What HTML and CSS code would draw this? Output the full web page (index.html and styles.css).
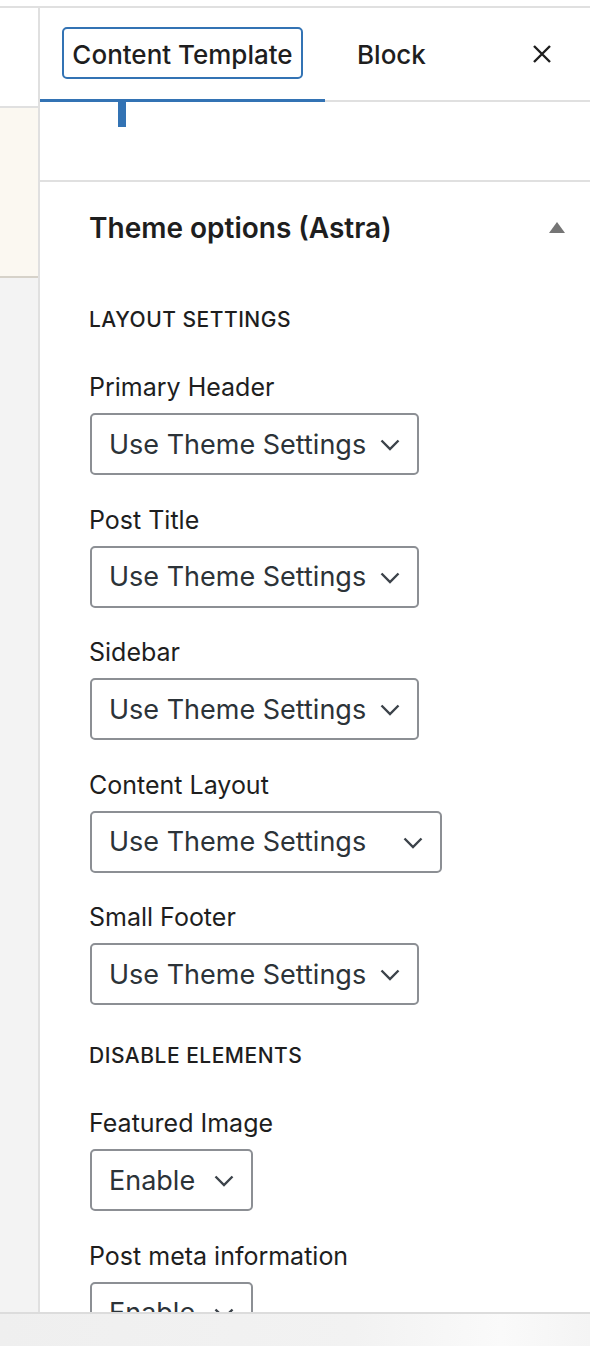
FILE: index.html
```html
<!DOCTYPE html>
<html>
<head>
<meta charset="utf-8">
<link rel="stylesheet" href="styles.css">
</head>
<body>
<div class="page">
  <div class="topbar"></div>
  <div class="main">
    <div class="canvas">
      <div class="canvas-head"></div>
      <div class="canvas-notice"></div>
      <div class="canvas-rest"></div>
    </div>
    <aside class="sidebar">
      <div class="tabs">
        <div class="tab tab-active"><span class="tab-box">Content Template</span></div>
        <div class="tab tab-block">Block</div>
        <div class="tab-close">
          <svg width="20" height="20" viewBox="0 0 20 20"><path d="M2 2 L18 18 M18 2 L2 18" stroke="#1e1e1e" stroke-width="2.4" fill="none"/></svg>
        </div>
      </div>
      <div class="tab-panel-gap"><div class="caret-bar"></div></div>
      <div class="panel">
        <div class="panel-head">
          <span class="panel-title">Theme options (Astra)</span>
          <svg class="panel-toggle" width="16" height="11" viewBox="0 0 16 11"><path d="M8 0 L16 11 L0 11 Z" fill="#757575"/></svg>
        </div>
        <div class="panel-body">
          <div class="section-heading">Layout Settings</div>
          <div class="field">
            <div class="field-label">Primary Header</div>
            <div class="select w-default"><span>Use Theme Settings</span><svg class="chev" width="20" height="12" viewBox="0 0 20 12"><path d="M1.5 1.5 L10 10 L18.5 1.5" stroke="#3c434a" stroke-width="2.4" fill="none"/></svg></div>
          </div>
          <div class="field">
            <div class="field-label">Post Title</div>
            <div class="select w-default"><span>Use Theme Settings</span><svg class="chev" width="20" height="12" viewBox="0 0 20 12"><path d="M1.5 1.5 L10 10 L18.5 1.5" stroke="#3c434a" stroke-width="2.4" fill="none"/></svg></div>
          </div>
          <div class="field">
            <div class="field-label">Sidebar</div>
            <div class="select w-default"><span>Use Theme Settings</span><svg class="chev" width="20" height="12" viewBox="0 0 20 12"><path d="M1.5 1.5 L10 10 L18.5 1.5" stroke="#3c434a" stroke-width="2.4" fill="none"/></svg></div>
          </div>
          <div class="field">
            <div class="field-label">Content Layout</div>
            <div class="select w-wide"><span>Use Theme Settings</span><svg class="chev" width="20" height="12" viewBox="0 0 20 12"><path d="M1.5 1.5 L10 10 L18.5 1.5" stroke="#3c434a" stroke-width="2.4" fill="none"/></svg></div>
          </div>
          <div class="field">
            <div class="field-label">Small Footer</div>
            <div class="select w-default"><span>Use Theme Settings</span><svg class="chev" width="20" height="12" viewBox="0 0 20 12"><path d="M1.5 1.5 L10 10 L18.5 1.5" stroke="#3c434a" stroke-width="2.4" fill="none"/></svg></div>
          </div>
          <div class="section-heading section-heading-next">Disable Elements</div>
          <div class="field">
            <div class="field-label">Featured Image</div>
            <div class="select w-small"><span>Enable</span><svg class="chev" width="20" height="12" viewBox="0 0 20 12"><path d="M1.5 1.5 L10 10 L18.5 1.5" stroke="#3c434a" stroke-width="2.4" fill="none"/></svg></div>
          </div>
          <div class="field">
            <div class="field-label">Post meta information</div>
            <div class="select w-small"><span>Enable</span><svg class="chev" width="20" height="12" viewBox="0 0 20 12"><path d="M1.5 1.5 L10 10 L18.5 1.5" stroke="#3c434a" stroke-width="2.4" fill="none"/></svg></div>
          </div>
        </div>
      </div>
    </aside>
  </div>
  <div class="bottombar"></div>
</div>
</body>
</html>
```
FILE: styles.css
```css
* { box-sizing: border-box; }
html, body { margin: 0; padding: 0; }
body {
  font-family: "Inter", "Liberation Sans", sans-serif;
  color: #1e1e1e;
  background: #fff;
}
.page {
  width: 590px;
  height: 1346px;
  display: flex;
  flex-direction: column;
  overflow: hidden;
}
.topbar {
  height: 8px;
  flex: none;
  border-bottom: 2px solid #e0e0e0;
  background: #fff;
}
.main {
  flex: 1;
  display: flex;
  min-height: 0;
  overflow: hidden;
}
.canvas {
  width: 40px;
  flex: none;
  border-right: 2px solid #e0e0e0;
  display: flex;
  flex-direction: column;
}
.canvas-head {
  height: 100px;
  background: #fff;
  border-bottom: 2px solid #e0e0e0;
}
.canvas-notice {
  height: 170px;
  background: #fbf8f1;
  border-bottom: 2px solid #d6d2c9;
}
.canvas-rest {
  flex: 1;
  background: #f3f3f3;
}
.sidebar {
  flex: 1;
  background: #fff;
  display: flex;
  flex-direction: column;
}
.tabs {
  height: 94px;
  flex: none;
  display: flex;
  align-items: stretch;
  border-bottom: 2px solid #e0e0e0;
}
.tab {
  display: flex;
  align-items: center;
  font-size: 26px;
  font-weight: 500;
  color: #1e1e1e;
  margin-bottom: -2px;
}
.tab-active {
  width: 285px;
  padding: 0 22px 0 22px;
  border-bottom: 3px solid #3373b4;
}
.tab-box {
  display: flex;
  align-items: center;
  justify-content: center;
  width: 241px;
  height: 52px;
  border: 2px solid #3373b4;
  border-radius: 5px;
  margin-top: -1px;
  padding-top: 2px;
}
.tab-block {
  padding-left: 32px;
  padding-top: 2px;
  border-bottom: 3px solid transparent;
}
.tab-close {
  margin-left: auto;
  width: 96px;
  display: flex;
  align-items: center;
  justify-content: center;
  padding-bottom: 1px;
}
.tab-panel-gap {
  height: 80px;
  flex: none;
  border-bottom: 2px solid #e0e0e0;
}
.caret-bar {
  width: 8px;
  height: 25px;
  margin-left: 78px;
  background: #3373b4;
}
.panel {
  flex: 1;
}
.panel-head {
  display: flex;
  align-items: center;
  justify-content: space-between;
  padding: 30px 25px 0 49px;
  height: 62px;
}
.panel-title {
  font-size: 28px;
  font-weight: 600;
  line-height: 32px;
}
.panel-toggle {
  margin-top: -2px;
}
.panel-body {
  padding: 64px 0 0 49px;
}
.section-heading {
  font-size: 21px;
  font-weight: 500;
  line-height: 24px;
  text-transform: uppercase;
  letter-spacing: 0.5px;
  margin-bottom: 41px;
}
.section-heading-next {
  margin-top: 39px;
}
.field {
  margin-bottom: 30.5px;
}
.field-label {
  font-size: 25px;
  line-height: 28px;
  margin-bottom: 12px;
}
.select {
  height: 62px;
  border: 2px solid #8c8f94;
  border-radius: 5px;
  display: flex;
  align-items: center;
  justify-content: space-between;
  padding: 0 17px 0 17px;
  margin-left: 1px;
  font-size: 27px;
  color: #2c3338;
}
.chev { margin-top: 2px; }
.w-default { width: 329px; }
.w-wide { width: 352px; }
.w-small { width: 163px; }
.bottombar {
  height: 34px;
  flex: none;
  border-top: 2px solid #dcdcdc;
  background: linear-gradient(90deg, #efefef 0%, #f2f2f2 60%, #fafafa 85%, #f4f4f4 100%);
}
```
